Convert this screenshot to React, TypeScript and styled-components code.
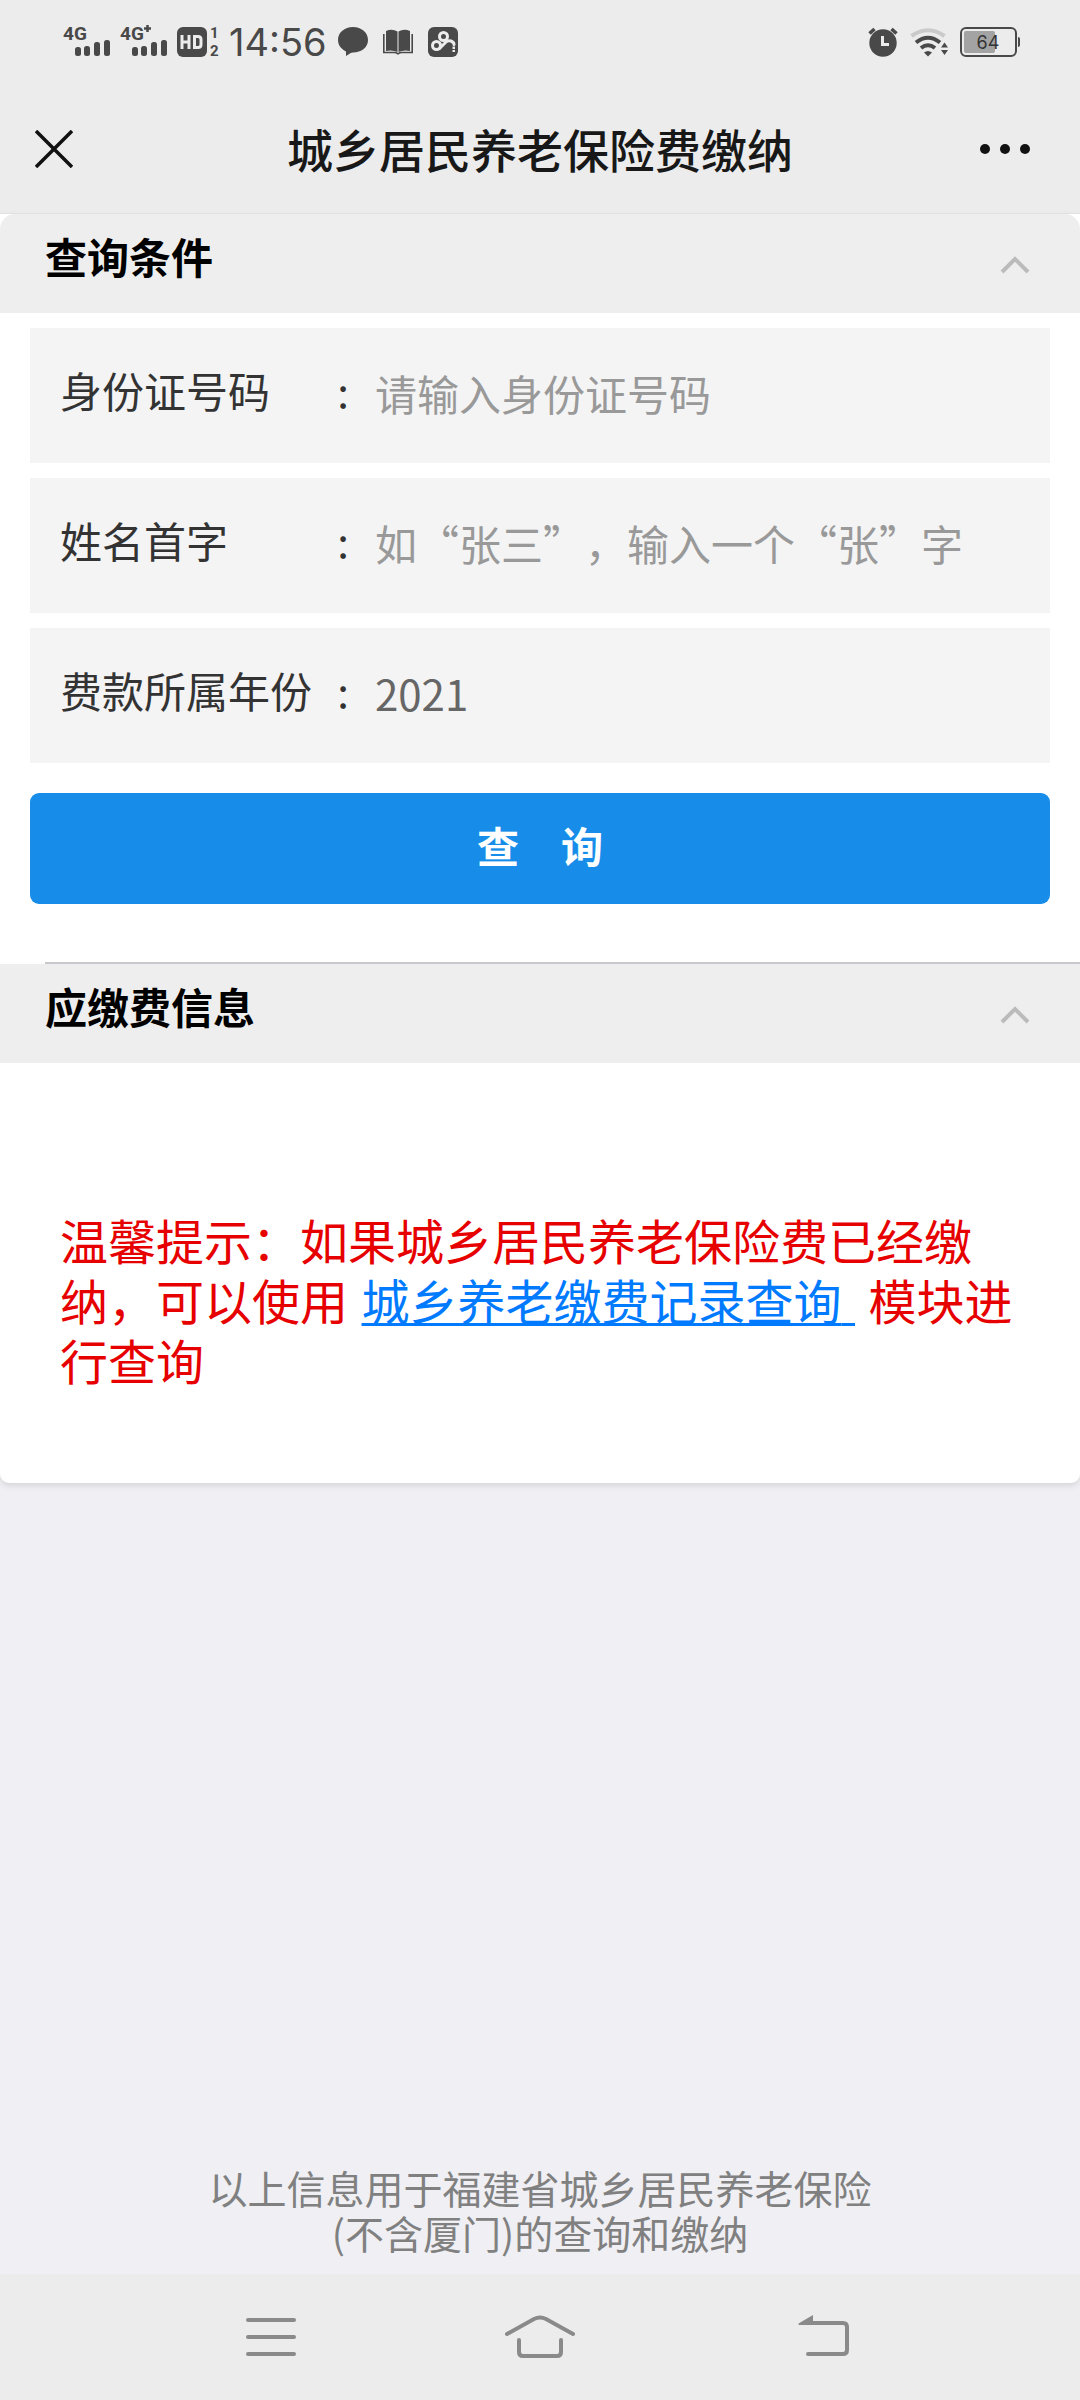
import React from 'react';
import styled, { createGlobalStyle } from 'styled-components';

const cjk = '"Noto Sans CJK SC", "Noto Sans", sans-serif';

const GlobalStyle = createGlobalStyle`
  * { box-sizing: border-box; }
  body {
    margin: 0;
    background: #efeff4;
    font-family: ${cjk};
    font-size: 42px;
    color: #333;
    text-spacing-trim: space-all;
  }
  button, input {
    margin: 0;
    padding: 0;
    border: 0;
    background: none;
    color: inherit;
    font: inherit;
    text-spacing-trim: inherit;
  }
  svg { display: block; flex: none; }
`;

const Page = styled.div`
  display: flex;
  flex-direction: column;
  min-height: 100vh;
`;

const StatusBar = styled.div`
  display: flex;
  justify-content: space-between;
  align-items: center;
  height: 84px;
  padding: 0 60px 0 62px;
  background: #ececec;
  color: #494949;
`;

const StatusGroup = styled.div<{ $gap: number }>`
  display: flex;
  align-items: center;
  gap: ${(p) => p.$gap}px;
`;

const Clock = styled.time`
  min-width: 100px;
  font-family: Inter, sans-serif;
  font-size: 38px;
  line-height: 40px;
`;

const TitleBar = styled.header`
  display: grid;
  grid-template-columns: 110px 1fr 110px;
  align-items: center;
  height: 130px;
  border-bottom: 1px solid #e4e4e4;
  background: #ececec;
  color: #181818;
`;

const BarButton = styled.button<{ $side: 'left' | 'right' }>`
  display: flex;
  justify-content: ${(p) => (p.$side === 'left' ? 'flex-start' : 'flex-end')};
  align-items: center;
  height: 96px;
  padding: ${(p) => (p.$side === 'left' ? '0 0 0 35px' : '0 50px 0 0')};
  color: #111;
`;

const PageTitle = styled.h1`
  margin: 0;
  padding-bottom: 2px;
  font-size: 46px;
  font-weight: 500;
  line-height: 60px;
  text-align: center;
`;

const Card = styled.main`
  border-radius: 0 0 9px 9px;
  background: #fff;
  box-shadow: 0 3px 6px rgba(0, 0, 0, 0.1);
`;

const SectionHead = styled.button<{ $rounded?: boolean }>`
  display: flex;
  justify-content: space-between;
  align-items: center;
  width: 100%;
  height: 99px;
  padding: 0 50px 15px 45px;
  border-radius: ${(p) => (p.$rounded ? '15px 15px 0 0' : '0')};
  background: #eee;
  color: #000;
  font-weight: 700;
  line-height: 60px;
  text-align: left;

  svg { margin-top: 18px; }
`;

const Form = styled.form`
  display: flex;
  flex-direction: column;
  gap: 15px;
  padding: 15px 30px 58px;
`;

const Field = styled.div`
  display: flex;
  align-items: center;
  height: 135px;
  padding: 0 30px 6px;
  background: #f4f4f4;
`;

const FieldLabel = styled.label`
  display: flex;
  justify-content: space-between;
  width: 289px;
  margin-right: 26px;
  padding-bottom: 6px;
  line-height: 60px;
`;

const FieldInput = styled.input`
  flex: 1;
  min-width: 0;
  height: 60px;
  outline: none;
  color: #666;
  line-height: 60px;

  &::placeholder { color: #999; opacity: 1; }
`;

const SubmitButton = styled.button`
  height: 111px;
  margin-top: 15px;
  padding-bottom: 9px;
  border-radius: 9px;
  background: #178de9;
  color: #fff;
  font-weight: 700;
`;

const Divider = styled.hr`
  height: 2px;
  margin: 0 0 0 45px;
  border: 0;
  background: #c8c7cc;
`;

const Tip = styled.p`
  margin: 0;
  padding: 150px 60px 90px;
  color: #e60000;
  font-family: Inter, ${cjk};
  font-size: 48px;
  line-height: 60px;
`;

const TipLink = styled.a`
  color: #007aff;
  text-decoration: underline;
  text-decoration-thickness: 3px;
  text-decoration-skip-ink: none;
  text-underline-offset: 3px;
`;

const Footnote = styled.footer`
  margin-top: auto;
  padding: 30px 190px 19px;
  color: #808080;
  font-size: 39px;
  line-height: 45px;
  text-align: center;
`;

const NavBar = styled.nav`
  display: grid;
  grid-template-columns: repeat(3, 1fr);
  justify-items: center;
  height: 126px;
  padding: 0 136px;
  background: #ececec;
  color: #8a8a8a;
`;

const NavButton = styled.button`
  display: flex;
  justify-content: center;
  align-items: center;
  width: 120px;
`;

function Signal({ plus }: { plus?: boolean }) {
  return (
    <svg width="48" height="44" viewBox="0 0 48 44" fill="currentColor" aria-hidden="true">
      <g fontFamily="Roboto, sans-serif" fontWeight="700">
        <text x="1" y="20" fontSize="19">4G</text>
      </g>
      {plus && <path d="M28.500 5v7M25 8.500h7" stroke="currentColor" strokeWidth="2.500" />}
      <rect x="13" y="27" width="6" height="9" rx="2.500" />
      <rect x="22" y="26" width="6" height="10" rx="2.500" />
      <rect x="32" y="22" width="6" height="14" rx="2.500" />
      <rect x="42" y="20" width="6" height="16" rx="2.500" />
    </svg>
  );
}

function HdIcon() {
  return (
    <svg width="44" height="44" viewBox="0 0 44 44" aria-hidden="true">
      <rect x="1" y="7" width="30" height="30" rx="6" fill="currentColor" />
      <path d="M6 15v14M13 15v14M6 22h7M18.500 16.500h3.500q3 0 3 3v5q0 3-3 3h-3.500z" fill="none" stroke="#ececec" strokeWidth="3" />
      <g fill="currentColor" fontFamily="Roboto, sans-serif" fontWeight="700" fontSize="15">
        <text x="34" y="18">1</text>
        <text x="34" y="36">2</text>
      </g>
    </svg>
  );
}

function ChatIcon() {
  return (
    <svg width="30" height="30" viewBox="0 0 30 30" fill="currentColor" aria-hidden="true">
      <path d="M15 0c8.500 0 15 5.500 15 13S23.500 25.500 15 25.500c-1 0-1.500.2-2.300.6L8 29V24.500C3 22 0 18 0 13 0 5.500 6.500 0 15 0z" />
    </svg>
  );
}

function BookIcon() {
  return (
    <svg width="30" height="30" viewBox="0 0 30 30" aria-hidden="true">
      <path d="M3 4Q9 1.500 14.500 4.500V25Q9 22.500 3 24zM27 4Q21 1.500 15.500 4.500V25Q21 22.500 27 24z" fill="currentColor" />
      <path d="M.8 7v18.500H11q2.500 0 4 1.300 1.500-1.300 4-1.300h10.200V7" fill="none" stroke="currentColor" strokeWidth="1.600" />
    </svg>
  );
}

function CloudIcon() {
  return (
    <svg width="30" height="30" viewBox="0 0 30 30" aria-hidden="true">
      <rect width="30" height="30" rx="6" fill="currentColor" />
      <g fill="none" stroke="#ececec" strokeWidth="3">
        <circle cx="15.500" cy="9.500" r="4" />
        <circle cx="8.500" cy="18.500" r="4" />
        <path d="M11.500 21.500l6.500-6.500q2-2 5-1 3 1.200 3 3.500" strokeLinecap="round" />
      </g>
      <path d="M24.500 19.500H27V22h-2.500zM24.500 23H27v2h-2.500z" fill="#ececec" />
    </svg>
  );
}

function AlarmIcon() {
  return (
    <svg width="30" height="30" viewBox="0 0 30 30" aria-hidden="true">
      <circle cx="15" cy="16" r="13.700" fill="currentColor" />
      <path d="M1.500 6.500l5-4.500M28.500 6.500l-5-4.500" stroke="currentColor" strokeWidth="3.600" />
      <path d="M14.500 9v8.500h6.500" fill="none" stroke="#ececec" strokeWidth="3" />
    </svg>
  );
}

function WifiIcon() {
  return (
    <svg width="38" height="30" viewBox="0 0 38 30" aria-hidden="true">
      <path d="M1.500 9Q18 -2.500 34.500 9" fill="none" stroke="#cacaca" strokeWidth="4" />
      <path d="M6 15.500Q18 6 30 15.500M11 21Q18 15.500 25 21" fill="none" stroke="currentColor" strokeWidth="4" />
      <path d="M14 25.500Q18 22.500 22 25.500L18 29.500zM31 20.500l3.500-5 3.500 5zM31 23l3.500 5 3.500-5z" fill="currentColor" />
    </svg>
  );
}

function BatteryIcon() {
  return (
    <svg width="60" height="30" viewBox="0 0 60 30" aria-hidden="true">
      <rect x="1" y="1" width="55" height="28" rx="5" fill="none" stroke="currentColor" strokeWidth="2" />
      <rect x="4" y="4" width="31" height="22" rx="2" fill="#a3a3a3" />
      <path d="M58 10q2 0 2 2v6q0 2-2 2z" fill="currentColor" />
      <text x="28" y="22" textAnchor="middle" fill="#333" fontFamily="Inter, sans-serif" fontSize="18">64</text>
    </svg>
  );
}

function Chevron() {
  return (
    <svg width="30" height="20" viewBox="0 0 30 20" fill="none" stroke="#bbb" strokeWidth="4" aria-hidden="true">
      <path d="M2 17L15 4l13 13" />
    </svg>
  );
}

const fields = [
  { id: 'idNumber', label: '身份证号码', placeholder: '请输入身份证号码' },
  { id: 'firstChar', label: '姓名首字', placeholder: '如“张三”，输入一个“张”字' },
  { id: 'feeYear', label: '费款所属年份', value: '2021' },
];

export default function App() {
  return (
    <Page lang="zh-CN">
      <GlobalStyle />
      <StatusBar>
        <StatusGroup $gap={9}>
          <Signal />
          <Signal plus />
          <HdIcon />
          <Clock>14:56</Clock>
          <StatusGroup $gap={15}>
            <ChatIcon />
            <BookIcon />
            <CloudIcon />
          </StatusGroup>
        </StatusGroup>
        <StatusGroup $gap={12}>
          <AlarmIcon />
          <WifiIcon />
          <BatteryIcon />
        </StatusGroup>
      </StatusBar>
      <TitleBar>
        <BarButton type="button" $side="left" aria-label="关闭">
          <svg width="38" height="38" viewBox="0 0 38 38" fill="none" stroke="currentColor" strokeWidth="3.500">
            <path d="M1 1l36 36M37 1L1 37" />
          </svg>
        </BarButton>
        <PageTitle>城乡居民养老保险费缴纳</PageTitle>
        <BarButton type="button" $side="right" aria-label="更多">
          <svg width="50" height="10" viewBox="0 0 50 10" fill="currentColor">
            <circle cx="5" cy="5" r="5" />
            <circle cx="25" cy="5" r="5" />
            <circle cx="45" cy="5" r="5" />
          </svg>
        </BarButton>
      </TitleBar>
      <Card>
        <SectionHead type="button" $rounded>
          查询条件
          <Chevron />
        </SectionHead>
        <Form onSubmit={(e) => e.preventDefault()}>
          {fields.map((f) => (
            <Field key={f.id}>
              <FieldLabel htmlFor={f.id}>
                <span>{f.label}</span>
                <span>:</span>
              </FieldLabel>
              <FieldInput id={f.id} placeholder={f.placeholder} defaultValue={f.value} />
            </Field>
          ))}
          <SubmitButton type="submit">查　询</SubmitButton>
        </Form>
        <Divider />
        <SectionHead type="button">
          应缴费信息
          <Chevron />
        </SectionHead>
        <Tip>
          温馨提示：如果城乡居民养老保险费已经缴纳，可以使用{' '}
          <TipLink href="#records">城乡养老缴费记录查询{'\u00a0'}</TipLink> 模块进行查询
        </Tip>
      </Card>
      <Footnote>以上信息用于福建省城乡居民养老保险(不含厦门)的查询和缴纳</Footnote>
      <NavBar>
        <NavButton type="button" aria-label="最近任务">
          <svg width="50" height="44" viewBox="0 0 50 44" fill="none" stroke="currentColor" strokeWidth="4" strokeLinecap="round">
            <path d="M2 5h46M2 22h46M2 39h46" />
          </svg>
        </NavButton>
        <NavButton type="button" aria-label="主页">
          <svg width="70" height="44" viewBox="0 0 70 44" fill="none" stroke="currentColor" strokeWidth="4" strokeLinecap="round">
            <path d="M2 19L29 4q6-3 12 0l27 15M14 25v12q0 4 4 4h34q4 0 4-4V25" />
          </svg>
        </NavButton>
        <NavButton type="button" aria-label="返回">
          <svg width="82" height="44" viewBox="-30 0 82 44" fill="none" stroke="currentColor" strokeWidth="4" strokeLinecap="round">
            <path d="M8 8h37q4 0 4 4v23q0 4-4 4H10" />
            <path d="M.5 8.500L15 0v10H1.500q-1.500 0-1-1.500z" fill="currentColor" stroke="none" />
          </svg>
        </NavButton>
      </NavBar>
    </Page>
  );
}
